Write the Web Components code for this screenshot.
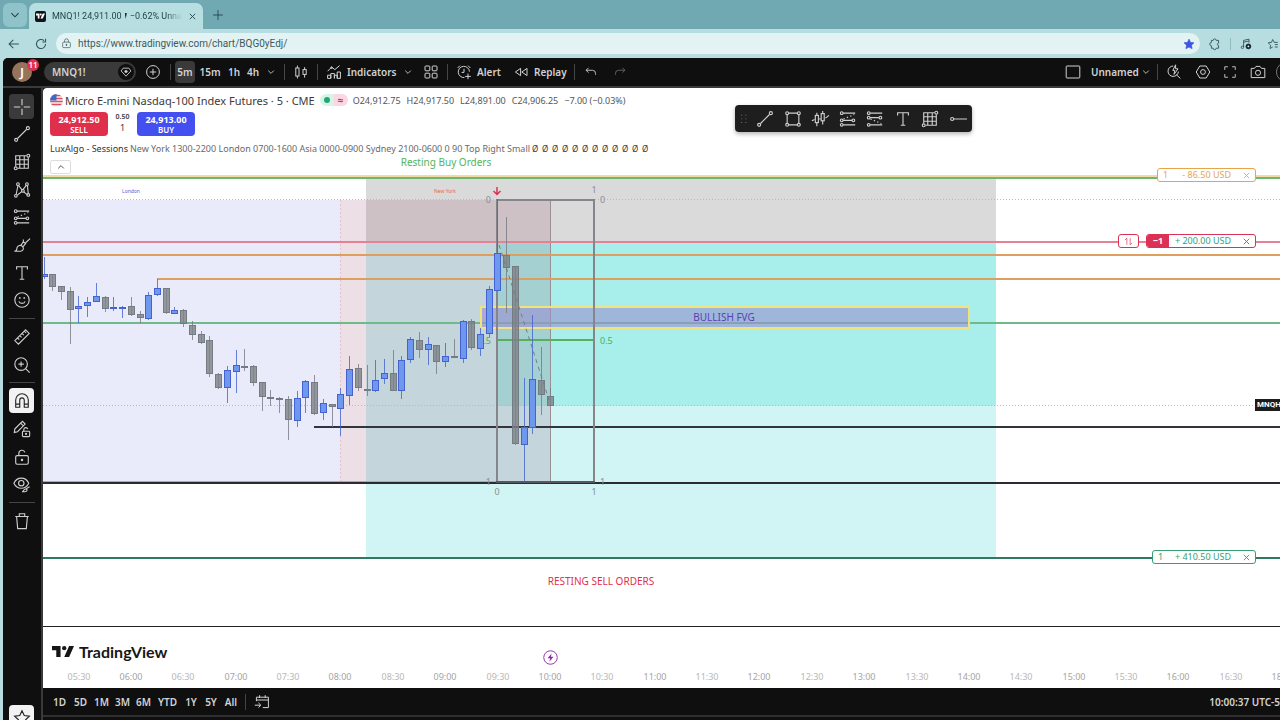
<!DOCTYPE html>
<html lang="en">
<head>
<meta charset="utf-8">
<title>MNQ1! chart</title>
<style>
  html, body { margin: 0; height: 100%; }
  body { font-family: "Noto Sans", "Open Sans", sans-serif; font-size: 10px; overflow: hidden; background: #b7dde1; }
</style>
</head>
<body>
<trading-window></trading-window>

<script>
const RESET = `
  *, *::before, *::after { box-sizing: border-box; }
  button { font: inherit; color: inherit; background: none; border: 0; padding: 0; margin: 0;
    display: inline-flex; align-items: center; justify-content: center; flex: none; white-space: nowrap; }
`;

function define(name, css, html, setup) {
  const tpl = document.createElement('template');
  tpl.innerHTML = `<style>${RESET}${css}</style>${html}`;
  customElements.define(name, class extends HTMLElement {
    constructor() {
      super();
      this.attachShadow({ mode: 'open' }).append(tpl.content.cloneNode(true));
    }
    connectedCallback() { if (setup) setup(this, this.shadowRoot); }
  });
}

/* ---------- icons: 20 x 20 grid, stroked with the current colour ---------- */
const ICONS = {
  chevron: '<path d="M6 8l4 4 4-4"/>',
  chevronUp: '<path d="M6 12l4-4 4 4"/>',
  close: '<path d="M4 4l12 12M16 4L4 16"/>',
  plus: '<path d="M10 3v14M3 10h14"/>',
  back: '<path d="M17 10H3M9 4l-6 6 6 6"/>',
  reload: '<path d="M16.5 10a6.5 6.5 0 1 1-2-4.7M16.5 2.5V7H12"/>',
  lock: '<rect x="3" y="7.500" width="14" height="10" rx="2"/><path d="M6.500 7.500V5a3.500 3.500 0 0 1 7 0v2.500"/><circle cx="10" cy="12.500" r="1" fill="currentColor"/>',
  starFull: '<path fill="currentColor" d="M10 2l2.500 5.300 5.700.7-4.200 4 1.100 5.700L10 15l-5.100 2.700L6 12 1.800 8l5.700-.7z"/>',
  star: '<path d="M10 2l2.500 5.300 5.700.7-4.200 4 1.100 5.700L10 15l-5.100 2.700L6 12 1.800 8l5.700-.7z"/>',
  starList: '<path d="M9.500 15L5 17.500l1-5.500-4-4 5.500-.7L9.500 2.500 12 7.300h6M13 11h5M13 15h5"/>',
  puzzle: '<path d="M7 4a2.500 2.500 0 0 1 5 0h4v4.500a2 2 0 0 0 0 4V17h-4a2.500 2.500 0 0 1-5 0H4v-4a2.700 2.700 0 0 1 0-5.500V4z"/>',
  music: '<path d="M6 15V4l9-2v6M6 7l9-2"/><circle cx="4" cy="15.500" r="2"/><circle cx="14" cy="14" r="4" fill="#123" stroke="#123"/><circle cx="14" cy="14" r="1.500" fill="#e3f2f2" stroke="none"/>',
  watch: '<path d="M6 4.500h8l3 4-7 7.500-7-7.500z"/><path d="M10 7v4.500M7.700 9.200h4.600" stroke-width="2"/>',
  plusCircle: '<circle cx="10" cy="10" r="8"/><path d="M10 6v8M6 10h8"/>',
  candles: '<rect x="3.500" y="5" width="4" height="10"/><path d="M5.500 2v3M5.500 15v3M14.500 4v3M14.500 13v4"/><rect x="12.500" y="7" width="4" height="6"/>',
  indicators: '<path d="M2 18v-4h4v4zM6 18v-6h4.500v6M10.500 18v-4h3.500v4M14 18v-8h4v8zM2 9l5-5 4 3 6-5"/><circle cx="7" cy="4.500" r="1"/>',
  grid: '<rect x="2.500" y="2.500" width="6" height="6" rx="1"/><rect x="11.500" y="2.500" width="6" height="6" rx="1"/><rect x="2.500" y="11.500" width="6" height="6" rx="1"/><rect x="11.500" y="11.500" width="6" height="6" rx="1"/>',
  alert: '<path d="M16.800 9.500a7 7 0 1 0-6.300 7.400M10 6v4.500H7M2 5l3-3M15 2l3 3M15 12v7M11.500 15.500h7"/>',
  replay: '<path d="M9.500 5.500v9L3 10zM17.500 5.500v9L11 10z"/>',
  undo: '<path d="M6.500 4L3 7.500 6.500 11M3 7.500h9a4.500 4.500 0 0 1 4.500 4.500v2"/>',
  redo: '<path d="M13.500 4L17 7.500 13.500 11M17 7.500H8A4.500 4.500 0 0 0 3.500 12v2"/>',
  square: '<rect x="1.500" y="2.500" width="17" height="15" rx="1"/>',
  quick: '<path d="M9 2.500a6.500 6.500 0 1 0 6.500 7M13 13.500l5 4.500M12 1L8.500 8H11l-1 5 5-7h-3z"/>',
  settings: '<path d="M6 2.500h8l4.500 7.500-4.500 7.500H6L1.500 10z"/><circle cx="10" cy="10" r="3"/>',
  full: '<path d="M2.500 7V2.500H7M13 2.500h4.500V7M17.500 13v4.500H13M7 17.500H2.500V13"/>',
  camera: '<path d="M1.500 5.500h4l2-2.500h5l2 2.500h4v11.500h-17z"/><circle cx="10" cy="11" r="3.200"/>',
  cross: '<path d="M10 1v7M10 12v7M1 10h7M12 10h7"/>',
  trend: '<circle cx="3.500" cy="16.500" r="1.700"/><circle cx="16.500" cy="3.500" r="1.700"/><path d="M5 15L15 5"/>',
  gridTool: '<path d="M3 15V3h12M17 5v12H5M3 7.500h14M3 12.500h14M7.500 3v14M12.500 3v14"/><circle cx="17" cy="3" r="1.600"/><circle cx="3" cy="17" r="1.600"/>',
  pattern: '<path d="M3.500 15L5.500 5M6.500 5.500l4 5M11 9.500l4-5M16 5l1 9M5 15.500l5-4M12 12l4 3.500"/><circle cx="3.200" cy="16.500" r="1.500"/><circle cx="5.500" cy="3.500" r="1.500"/><circle cx="11" cy="11" r="1.500"/><circle cx="15.500" cy="3.500" r="1.500"/><circle cx="17" cy="15.500" r="1.500"/>',
  projection: '<path d="M4.500 3.500H18M4.500 11.500h10M4.500 16.500H18"/><path d="M5 10l12-5" stroke-dasharray="1.500 2.500"/><circle cx="3" cy="3.500" r="1.500"/><circle cx="3" cy="11.500" r="1.500"/><circle cx="16" cy="11.500" r="1.500"/><circle cx="3" cy="16.500" r="1.500"/>',
  projectionDown: '<path d="M4.500 3.500H18M4.500 8.500h10M4.500 16.500H18"/><path d="M5 10l12 5" stroke-dasharray="1.500 2.500"/><circle cx="3" cy="3.500" r="1.500"/><circle cx="3" cy="8.500" r="1.500"/><circle cx="16" cy="8.500" r="1.500"/><circle cx="3" cy="16.500" r="1.500"/>',
  brush: '<path d="M1.500 17c3 0 2.500-2 3-4 .6-2.500 4-3.500 6-1.500s1 5-2 5.500zM9 10l2.500-3.500 2.500 2L11 12M14 7.500L19 3M11.500 6.500V4"/>',
  text: '<path d="M4 6V3h12v3M10 3v14M7.500 17h5"/>',
  smile: '<circle cx="10" cy="10" r="8"/><path d="M6.500 11.500c1 3 6 3 7 0"/><path d="M7.500 7v1.500M12.500 7v1.500" stroke-width="1.800"/>',
  ruler: '<path d="M2 14L14 2l4 4L6 18zM5 11l2 2M7.500 8.500l2 2M10 6l2 2M12.500 3.500l2 2"/>',
  zoom: '<circle cx="9" cy="9" r="7"/><path d="M14 14l4.500 4.500M9 6v6M6 9h6"/>',
  magnet: '<path d="M3 17V9a7 7 0 0 1 14 0v8h-4.500V9a2.500 2.500 0 0 0-5 0v8zM3 13.500h4.500M12.500 13.500H17"/>',
  penLock: '<path d="M2 10L10.500 1.500l3 3L5 13l-3.500.8zM8.500 3.500l3 3"/><rect x="10.500" y="12.500" width="8" height="6" rx="1"/><path d="M12 12.500v-2a2.200 2.200 0 0 1 4.300-.5"/><circle cx="14.500" cy="15.500" r=".6"/>',
  unlock: '<rect x="3" y="8.500" width="14" height="9.500" rx="1.500"/><path d="M6.500 8.500V6a3.500 3.500 0 0 1 6.800-1.200"/><path d="M10 12v2.500" stroke-width="2.400"/>',
  eye: '<path d="M1 8c3.500-7.500 13-7.500 16.500 0-3.500 7.500-13 7.500-16.500 0z"/><circle cx="9.200" cy="8" r="3"/><path d="M10 17.500c2 0 1.500-3 4-3s2 3-1 3zM14 14.500l4.500-2.500"/>',
  trash: '<path d="M2.500 5h15M4 5l1.200 13.500h9.600L16 5M7 5V2h6v3"/>',
  rect: '<path d="M5 3.500h10M5 16.500h10M3.500 5v10M16.500 5v10"/><circle cx="3.500" cy="3.500" r="1.600"/><circle cx="16.500" cy="3.500" r="1.600"/><circle cx="3.500" cy="16.500" r="1.600"/><circle cx="16.500" cy="16.500" r="1.600"/>',
  bars: '<path d="M1 12l3-1.500M16 9l4-3M6.500 3v3M6.500 14v4M13 1v3M13 12v4M9 10h2"/><rect x="4.800" y="6" width="3.400" height="8"/><rect x="11.300" y="4" width="3.400" height="8"/>',
  hline: '<circle cx="3.500" cy="10" r="1.700"/><path d="M5.500 10H20"/>',
  grip: '<path d="M6 3v1.500M13 3v1.500M6 9v1.500M13 9v1.500M6 15v1.500M13 15v1.500" stroke-width="2"/>',
  calendar: '<path d="M3 9V4h15v13h-7M3 7.500h15M7 1.500V5M14 1.500V5M1 14h7M5.500 11l3 3-3 3"/>',
  swap: '<path d="M7 16V4L3.500 7.500M13 4v12l3.500-3.500"/>',
  bolt: '<circle cx="10" cy="10" r="9"/><path d="M11.500 4.500L6 11h3.500l-1 4.500L14 9h-3.500z" fill="currentColor" stroke="none"/>'
};

define('tv-icon', `
  :host { display: inline-flex; flex: none; width: var(--icon, 16px); height: var(--icon, 16px); }
  svg { width: 100%; height: 100%; fill: none; stroke: currentColor; stroke-width: var(--stroke, 1.25); overflow: visible; }
`, `<svg viewBox="0 0 20 20" aria-hidden="true"></svg>`, (host, root) => {
  root.querySelector('svg').innerHTML = ICONS[host.getAttribute('name')] || '';
});

/* ---------- browser chrome ---------- */
define('browser-tabs', `
  :host { display: flex; height: 29px; padding: 3px 3px 0; background: #71a9b3; color: #24434a; }
  .list { width: 24px; height: 24px; border-radius: 6px; background: #8fc2c9; --icon: 18px; }
  .tab { display: flex; align-items: center; gap: 6px; width: 174px; height: 26px; margin-left: 2px; padding: 0 6px;
    background: #b7dfe2; border-radius: 7px 7px 0 0; }
  .fav { display: flex; align-items: center; justify-content: center; flex: none; width: 11px; height: 11px; border-radius: 2px; background: #12131a; }
  .title { flex: 1; display: flex; align-items: center; gap: 3px; overflow: hidden; white-space: nowrap; font-family: Roboto, sans-serif; font-size: 9px; color: #27454b;
    -webkit-mask-image: linear-gradient(90deg, #000 88%, transparent); mask-image: linear-gradient(90deg, #000 88%, transparent); }
  .down { width: 6px; height: 6px; background: #16282c; clip-path: polygon(0 0, 100% 0, 50% 100%); }
  .tab button { --icon: 9px; --stroke: 2; }
  .new { width: 30px; height: 24px; --icon: 14px; }
`, `
  <button class="list" aria-label="Search tabs"><tv-icon name="chevron"></tv-icon></button>
  <div class="tab">
    <span class="fav"><svg width="9" height="6" viewBox="0 0 36 20" fill="#fff"><path d="M0 0h14v20H7V8H0zM27 0h9l-9 20h-9z"/><circle cx="19" cy="4" r="4"/></svg></span>
    <span class="title"><span>MNQ1! 24,911.00</span><span class="down"></span><span>−0.62% Unna</span></span>
    <button aria-label="Close tab"><tv-icon name="close"></tv-icon></button>
  </div>
  <button class="new" aria-label="New tab"><tv-icon name="plus"></tv-icon></button>
`);

define('browser-address', `
  :host { display: flex; align-items: center; height: 29px; background: #b7dde1; color: #33545a; overflow: hidden; }
  .nav { width: 27px; height: 24px; --icon: 14px; --stroke: 1.5; }
  .url { display: flex; align-items: center; flex: 1; height: 21px; margin-left: 2px; padding: 0 5px; border-radius: 11px; background: #e3f2f2; --icon: 12px; }
  .lock { --icon: 11px; }
  input { flex: 1; min-width: 0; margin: 0 0 0 6px; border: 0; padding: 0; background: none; outline: 0; font: inherit; font-family: Roboto, sans-serif; font-size: 10px; color: #3d5a60; }
  .fav { color: #3d54e0; --icon: 12px; }
  .ext { width: 30px; height: 24px; --icon: 12px; --stroke: 1.5; }
  .sep { width: 1px; height: 12px; background: #8fbcc2; }
  .tail { display: flex; align-items: center; margin-right: -5px; }
  .tail .last { width: 24px; }
`, `
  <button class="nav" aria-label="Back"><tv-icon name="back"></tv-icon></button>
  <button class="nav" aria-label="Reload"><tv-icon name="reload"></tv-icon></button>
  <div class="url">
    <tv-icon class="lock" name="lock"></tv-icon>
    <input aria-label="Address" value="https://www.tradingview.com/chart/BQG0yEdj/">
    <button class="fav" aria-label="Bookmarked"><tv-icon name="starFull"></tv-icon></button>
  </div>
  <div class="tail">
    <button class="ext" aria-label="Extensions"><tv-icon name="puzzle"></tv-icon></button>
    <span class="sep"></span>
    <button class="ext" aria-label="Media"><tv-icon name="music"></tv-icon></button>
    <button class="ext last" aria-label="Favorites"><tv-icon name="starList"></tv-icon></button>
  </div>
`);

/* ---------- top toolbar ---------- */
define('tv-toolbar', `
  :host { display: flex; align-items: center; height: 30px; background: #0f0f0f; color: #d2d2d2; overflow: hidden;
    border-radius: 5px 0 0 0; border-bottom: 2px solid #3a3a3a; font-size: 10px; font-weight: 600; }
  button { height: 22px; }
  .avatar { position: relative; width: 38px; }
  .face { display: flex; align-items: center; justify-content: center; width: 20px; height: 20px; border-radius: 50%; background: #96745c; color: #fff; font-size: 13px; }
  .count { position: absolute; right: 2px; top: -2px; min-width: 12px; height: 12px; line-height: 12px; border-radius: 6px; background: #e0304e; color: #fff; font-size: 8px; text-align: center; }
  .symbol { width: 92px; height: 20px; margin-left: 3px; padding: 0 2px 0 8px; border-radius: 10px; background: #3a3a3a; justify-content: space-between; }
  .symbol span { display: flex; align-items: center; justify-content: center; width: 16px; height: 16px; border-radius: 50%; background: #0f0f0f; --icon: 14px; }
  .sep { flex: none; width: 1px; height: 16px; background: #454545; }
  .w16 { width: 16px; } .w18 { width: 18px; } .w20 { width: 20px; } .w22 { width: 22px; }
  .w24 { width: 24px; } .w26 { width: 26px; } .w28 { width: 28px; } .w30 { width: 30px; } .w32 { width: 32px; } .w34 { width: 34px; }
  .on { margin-left: 4px; border-radius: 4px; background: #3a3a3a; }
  .chev { --icon: 14px; }
  .g { margin-left: 5px; }
  .label { justify-content: flex-start; gap: 5px; padding-left: 8px; }
  .ind { width: 78px; } .alert { width: 57px; } .replay { width: 64px; }
  .off { color: #6a6a6a; }
  .right { display: flex; align-items: center; margin-left: auto; margin-right: -16px; }
  .name { width: 70px; gap: 10px; justify-content: flex-start; }
  .publish { width: 20px; height: 20px; margin-left: 4px; border: 1px solid #777; border-radius: 50%; }
  .sm { --icon: 14px; }
`, `
  <button class="avatar" aria-label="Profile"><span class="face">J</span><span class="count">11</span></button>
  <button class="symbol">MNQ1!<span><tv-icon name="watch"></tv-icon></span></button>
  <button class="w34" aria-label="Compare"><tv-icon name="plusCircle"></tv-icon></button>
  <span class="sep"></span>
  <button class="w20 on">5m</button>
  <button class="w30">15m</button>
  <button class="w18">1h</button>
  <button class="w20">4h</button>
  <button class="w16 chev" aria-label="Intervals"><tv-icon name="chevron"></tv-icon></button>
  <span class="sep g"></span>
  <button class="w32" aria-label="Chart type"><tv-icon name="candles"></tv-icon></button>
  <span class="sep"></span>
  <button class="label ind"><tv-icon name="indicators"></tv-icon>Indicators</button>
  <button class="w24 chev" aria-label="Favorite indicators"><tv-icon name="chevron"></tv-icon></button>
  <button class="w22" aria-label="Templates"><tv-icon name="grid"></tv-icon></button>
  <span class="sep g"></span>
  <button class="label alert"><tv-icon name="alert"></tv-icon>Alert</button>
  <button class="label replay"><tv-icon name="replay"></tv-icon>Replay</button>
  <span class="sep g"></span>
  <button class="w32 sm" aria-label="Undo"><tv-icon name="undo"></tv-icon></button>
  <button class="w26 sm off" aria-label="Redo"><tv-icon name="redo"></tv-icon></button>
  <div class="right">
    <button class="name"><tv-icon name="square"></tv-icon>Unnamed</button>
    <button class="w22 chev" aria-label="Layouts"><tv-icon name="chevron"></tv-icon></button>
    <span class="sep"></span>
    <button class="w32" aria-label="Quick search"><tv-icon name="quick"></tv-icon></button>
    <button class="w26" aria-label="Settings"><tv-icon name="settings"></tv-icon></button>
    <button class="w28 sm" aria-label="Fullscreen"><tv-icon name="full"></tv-icon></button>
    <button class="w28" aria-label="Snapshot"><tv-icon name="camera"></tv-icon></button>
    <button class="publish" aria-label="Publish"></button>
  </div>
`);

/* ---------- drawing tools ---------- */
define('tv-drawing-bar', `
  :host { display: flex; flex-direction: column; align-items: center; width: 40px; padding: 6px 1px 0 0; overflow: hidden;
    background: #0f0f0f; color: #cfcfcf; border-right: 2px solid #3a3a3a; --icon: 18px; }
  button { width: 25px; height: 25px; border-radius: 4px; }
  .group { display: flex; flex-direction: column; justify-content: space-between; flex: none; }
  .draw { height: 219px; } .measure { height: 53px; } .lock { height: 109px; }
  .sep { flex: none; width: 26px; height: 1px; margin: 5px 0; background: #444; }
  .on { background: #3a3a3a; }
  .lit { background: #f2f2f2; color: #222; }
  .fav { margin-top: auto; margin-bottom: -10px; }
`, `
  <div class="group draw">
    <button class="on" aria-label="Cross"><tv-icon name="cross"></tv-icon></button>
    <button aria-label="Trend line"><tv-icon name="trend"></tv-icon></button>
    <button aria-label="Gann and Fibonacci"><tv-icon name="gridTool"></tv-icon></button>
    <button aria-label="Patterns"><tv-icon name="pattern"></tv-icon></button>
    <button aria-label="Forecasting"><tv-icon name="projection"></tv-icon></button>
    <button aria-label="Brushes"><tv-icon name="brush"></tv-icon></button>
    <button aria-label="Text"><tv-icon name="text"></tv-icon></button>
    <button aria-label="Icons"><tv-icon name="smile"></tv-icon></button>
  </div>
  <span class="sep"></span>
  <div class="group measure">
    <button aria-label="Measure"><tv-icon name="ruler"></tv-icon></button>
    <button aria-label="Zoom in"><tv-icon name="zoom"></tv-icon></button>
  </div>
  <span class="sep"></span>
  <div class="group lock">
    <button class="lit" aria-label="Magnet"><tv-icon name="magnet"></tv-icon></button>
    <button aria-label="Stay in drawing mode"><tv-icon name="penLock"></tv-icon></button>
    <button aria-label="Lock drawings"><tv-icon name="unlock"></tv-icon></button>
    <button aria-label="Hide drawings"><tv-icon name="eye"></tv-icon></button>
  </div>
  <span class="sep"></span>
  <button aria-label="Remove"><tv-icon name="trash"></tv-icon></button>
  <button class="lit fav" aria-label="Favorites"><tv-icon name="star"></tv-icon></button>
`);

/* ---------- chart plot ---------- */
/* Bars: [up, high, open/close top, open/close bottom, low], in plot rows. */
const BARS = [
  [1,169,186,189,191],[0,186,186,199,203],[0,198,198,204,212],[0,199,203,222,256],[1,208,218,221,235],
  [1,209,214,218,229],[1,195,208,214,214],[0,208,209,221,224],[1,209,219,221,223],[1,218,219,220,230],
  [0,209,218,227,228],[0,223,226,230,235],[1,204,207,231,232],[1,191,200,207,208],[0,200,200,225,226],
  [1,219,222,226,226],[0,221,222,236,239],[0,233,237,247,252],[0,243,246,255,256],[0,248,252,286,289],
  [0,285,286,300,301],[1,278,282,300,315],[1,262,277,284,305],[0,261,278,279,283],[0,277,278,295,298],
  [0,294,294,309,323],[0,302,309,311,318],[0,309,310,312,325],[0,308,311,332,352],[1,303,310,333,339],
  [1,292,293,310,325],[0,287,294,326,327],[1,311,315,325,332],[0,316,316,319,339],[1,300,306,321,348],
  [1,268,281,308,317],[0,276,280,300,303],[0,277,301,303,308],[1,272,292,303,304],[1,271,285,291,296],
  [0,262,285,303,303],[1,268,272,303,311],[1,249,251,272,275],[0,244,252,262,270],[1,249,256,262,277],
  [0,257,257,274,286],[1,255,268,274,279],[0,251,268,270,270],[1,232,233,271,275],[0,231,233,260,262],
  [1,240,246,261,268],[1,198,201,246,249],[1,111,165,203,203],[0,129,167,180,225],[0,178,178,356,357],
  [1,290,339,357,394],[1,227,291,340,346],[0,259,292,307,327],[0,300,308,318,318]
];

define('tv-plot', `
  :host { display: block; overflow: hidden; }
  svg { display: block; width: 100%; height: 100%; }
  text { font-family: inherit; font-size: 9px; }
  .mid { text-anchor: middle; }
  .end { text-anchor: end; }
  .lvl { fill: #8a8f90; }
`, `
  <svg shape-rendering="crispEdges">
    <g class="zones">
      <rect x="0" y="112" width="297" height="281" fill="#e9ebfb"/>
      <rect x="297" y="112" width="27" height="281" fill="#ecdfe6"/>
      <rect x="323" y="88" width="630" height="67" fill="#dbdadb"/>
      <rect x="323" y="112" width="184" height="43" fill="#cdc1c6"/>
      <rect x="323" y="155" width="630" height="314" fill="#d1f5f4"/>
      <rect x="507" y="155" width="446" height="163" fill="#a8efec"/>
      <rect x="323" y="155" width="184" height="238" fill="#c4d5dc"/>
      <rect x="454" y="155" width="53" height="163" fill="#a5d0d1"/>
      <path d="M0 393.500h507" stroke="#a9a9b8"/>
      <path d="M507.500 112v281" stroke="#9a8f97"/>
      <path d="M297.500 112v281" stroke="#e2c3cd" stroke-dasharray="2 2"/>
    </g>
    <g stroke="#b9b9bc" stroke-dasharray="1 2">
      <path d="M0 111.500H9999M0 317.500H9999"/>
    </g>
    <g>
      <rect x="0" y="87" width="100%" height="2" fill="#f3d9a4"/>
      <rect x="0" y="89" width="100%" height="2" fill="#6cb870"/>
      <rect x="0" y="153" width="100%" height="2" fill="#e58097"/>
      <path d="M0 167H9999M114 191H9999" stroke="#dd9f5e" stroke-width="2"/>
      <path d="M0 235H9999" stroke="#70b98a" stroke-width="2"/>
      <path d="M271 339H9999" stroke="#33353c" stroke-width="2"/>
      <path d="M0 395H9999" stroke="#2a2c31" stroke-width="2"/>
      <path d="M0 470H9999" stroke="#2f7a5f" stroke-width="2"/>
      <rect x="0" y="538" width="100%" height="1" fill="#222"/>
    </g>
    <rect x="438" y="219" width="488" height="21" fill="#9a8fd0" fill-opacity=".6" stroke="#f0e27c" stroke-width="2"/>
    <path d="M454 252h96" stroke="#57b05a" stroke-width="2"/>
    <path d="M454 111v283M551 111v283M453 112h99" stroke="#85858b" stroke-width="2" fill="none"/>
    <path d="M453 394h99" stroke="#55585f" stroke-width="2"/>
    <g class="lvl">
      <text class="end" x="448" y="115">0</text><text x="557" y="115">0</text>
      <text class="mid" x="551" y="105">1</text>
      <text class="end" x="448" y="397">1</text><text x="557" y="397">1</text>
      <text class="mid" x="454" y="407">0</text><text class="mid" x="551" y="407">1</text>
      <text class="end" x="448" y="256" fill="#4fae54">0.5</text><text x="557" y="256" fill="#4fae54">0.5</text>
    </g>
    <g class="bars"></g>
    <path d="M456 157L506 312" stroke="#6e7f85" stroke-dasharray="4 4" fill="none" shape-rendering="auto"/>
    <path d="M454 99v7M450.500 103l3.500 3.500 3.500-3.500" stroke="#e0304e" stroke-width="1.500" fill="none" shape-rendering="auto"/>
    <text class="mid" x="88" y="105" fill="#5a62d8" style="font-size:5px">London</text>
    <text class="mid" x="402" y="105" fill="#f0644c" style="font-size:5px">New York</text>
    <text class="mid" x="403" y="78" fill="#54b45a" style="font-size:10px">Resting Buy Orders</text>
    <text class="mid" x="681" y="233" fill="#5b3fb4" style="font-size:10px">BULLISH FVG</text>
    <text class="mid" x="558" y="497" fill="#e0304e" style="font-size:10px">RESTING SELL ORDERS</text>
    <g class="times"></g>
  </svg>
`, (host, root) => {
  const step = 8.73;
  root.querySelector('.bars').innerHTML = BARS.map(([up, hi, top, bottom, lo], i) => {
    const x = Math.round(i * step + 0.5);
    const [fill, edge] = up ? ['#6d98ee', '#4463d0'] : ['rgba(124,130,135,.8)', '#757b82'];
    return `<path d="M${x + 0.5} ${hi}V${lo}" stroke="${edge}" stroke-opacity=".8"/>` +
      `<rect x="${x - 2.5}" y="${top + 0.5}" width="6" height="${Math.max(bottom - top - 1, 1)}" fill="${fill}" stroke="${edge}"/>`;
  }).join('');
  let labels = '';
  for (let n = 0; n < 24; n++) {
    const minutes = 330 + n * 30 + (n === 23 ? 60 : 0);
    const text = String(Math.floor(minutes / 60)).padStart(2, '0') + ':' + String(minutes % 60).padStart(2, '0');
    labels += `<text class="mid" x="${Math.round(35.5 + n * 6 * step)}" y="592" fill="${minutes % 60 ? '#b8b8b8' : '#a4a4a4'}">${text}</text>`;
  }
  root.querySelector('.times').innerHTML = labels;
});

/* ---------- legend ---------- */
define('tv-legend', `
  :host { display: flex; flex-direction: column; align-items: flex-start; color: #3a3a3a; white-space: nowrap; }
  .row { display: flex; align-items: center; }
  .head { height: 14px; }
  .flag { flex: none; margin-right: 2px; }
  h1 { margin: 0; font-size: 11px; font-weight: 400; }
  .state { display: flex; margin: 0 5px; border-radius: 6px; overflow: hidden; height: 12px; }
  .state span { display: flex; align-items: center; justify-content: center; width: 14px; }
  .open { background: #d8f3e8; } .open::before { content: ""; width: 6px; height: 6px; border-radius: 50%; background: #1fa874; }
  .delay { background: #fbd7e3; color: #d2306a; font-size: 10px; font-weight: 700; line-height: 12px; }
  .ohlc { display: flex; gap: 6px; font-size: 9px; color: #555; }
  .trade { height: 24px; margin-top: 5px; }
  .trade button { flex-direction: column; width: 58px; height: 24px; border-radius: 4px; color: #fff; font-weight: 700; font-size: 9px; line-height: 11px; }
  .trade small { font-size: 8px; font-weight: 600; line-height: 9px; }
  .sell { background: #df2f4b; } .buy { background: #4350ef; }
  .spread { display: flex; flex-direction: column; align-items: center; width: 29px; font-size: 9px; line-height: 14px; }
  .spread small { font-size: 7px; line-height: 8px; }
  .study { height: 14px; margin-top: 5px; font-size: 9px; color: #6a6a6a; }
  .study b { margin-right: 2px; font-weight: 400; color: #333; }
  .nulls { display: flex; color: #333; }
  .nulls span { width: 10px; text-align: center; font-size: 8px; }
  .fold { width: 21px; height: 14px; margin-top: 5px; border: 1px solid #ddd; border-radius: 2px; background: #fff; --icon: 14px; }
`, `
  <div class="row head">
    <svg class="flag" width="13" height="13" viewBox="0 0 13 13"><clipPath id="c"><circle cx="6.500" cy="6.500" r="6.500"/></clipPath>
      <g clip-path="url(#c)"><path fill="#f3f3f7" d="M0 0h13v13H0z"/><path stroke="#dd4f5c" stroke-width="1.500" d="M0 1.500h13M0 4.500h13M0 7.500h13M0 10.500h13"/><path fill="#3f69c4" d="M0 0h6.500v6.500H0z"/></g></svg>
    <h1>Micro E-mini Nasdaq-100 Index Futures · 5 · CME</h1>
    <div class="state"><span class="open"></span><span class="delay">≈</span></div>
    <div class="ohlc"><span>O24,912.75</span><span>H24,917.50</span><span>L24,891.00</span><span>C24,906.25</span><span>−7.00 (−0.03%)</span></div>
  </div>
  <div class="row trade">
    <button class="sell">24,912.50<small>SELL</small></button>
    <div class="spread"><small>0.50</small>1</div>
    <button class="buy">24,913.00<small>BUY</small></button>
  </div>
  <div class="row study"><b>LuxAlgo - Sessions</b><span>New York 1300-2200 London 0700-1600 Asia 0000-0900 Sydney 2100-0600 0 90 Top Right Small</span>
    <div class="nulls"></div></div>
  <button class="fold" aria-label="Collapse legend"><tv-icon name="chevronUp"></tv-icon></button>
`, (host, root) => {
  root.querySelector('.nulls').innerHTML = '<span>Ø</span>'.repeat(12);
});

define('tv-favorites', `
  :host { display: flex; align-items: center; justify-content: space-between; height: 27px; padding: 0 1px 0 2px; border-radius: 4px; background: #1e1e1e; color: #d0d0d0;
    box-shadow: 0 2px 4px rgba(0,0,0,.3); --icon: 18px; }
  button { width: 27px; height: 27px; }
  .grip { width: 14px; color: #666; --icon: 12px; }
`, `
  <button class="grip" aria-label="Move"><tv-icon name="grip"></tv-icon></button>
  <button aria-label="Trend line"><tv-icon name="trend"></tv-icon></button>
  <button aria-label="Rectangle"><tv-icon name="rect"></tv-icon></button>
  <button aria-label="Bars pattern"><tv-icon name="bars"></tv-icon></button>
  <button aria-label="Long position"><tv-icon name="projection"></tv-icon></button>
  <button aria-label="Short position"><tv-icon name="projectionDown"></tv-icon></button>
  <button aria-label="Text"><tv-icon name="text"></tv-icon></button>
  <button aria-label="Gann box"><tv-icon name="gridTool"></tv-icon></button>
  <button aria-label="Horizontal ray"><tv-icon name="hline"></tv-icon></button>
`);

define('tv-order', `
  :host { display: flex; align-items: center; height: 14px; color: var(--line); font-size: 9px; line-height: 12px; }
  .swap { width: 21px; height: 14px; margin-right: 7px; border: 1px solid; border-radius: 3px; background: #fff; --icon: 11px; }
  .box { display: flex; align-items: center; height: 14px; border: 1px solid; border-radius: 3px; background: #fff; overflow: hidden; }
  .qty { width: 15px; text-align: center; }
  .pnl { width: var(--pnl); padding-right: 7px; text-align: right; color: var(--value, inherit); white-space: nowrap; }
  .box button { width: 17px; --icon: 9px; --stroke: 2; }
  :host(:not([swap])) .swap { display: none; }
  :host([swap]) .qty { width: 22px; background: var(--line); }
  :host([swap]) .qty ::slotted(*) { color: #fff; font-weight: 700; }
`, `
  <button class="swap" aria-label="Reverse"><tv-icon name="swap"></tv-icon></button>
  <div class="box"><span class="qty"><slot name="qty"></slot></span><span class="pnl"><slot></slot></span>
    <button aria-label="Close order"><tv-icon name="close"></tv-icon></button></div>
`);

define('tv-chart', `
  :host { display: block; position: relative; min-width: 0; background: #fff; overflow: hidden; border-radius: 4px 0 0 0; }
  tv-plot { position: absolute; inset: 0; }
  tv-legend { position: absolute; left: 7px; top: 5px; }
  tv-favorites { position: absolute; left: 692px; top: 17px; width: 237px; }
  tv-order { position: absolute; right: 24px; }
  .limit { top: 80px; --line: #e8a44a; --pnl: 65px; }
  .position { top: 146px; --line: #dc3055; --value: #2fa37a; --pnl: 69px; }
  .stop { top: 462px; --line: #35a06f; --pnl: 70px; }
  .last { position: absolute; right: 0; top: 311px; width: 25px; height: 12px; padding-left: 2px; background: #1c1c1c; color: #fff; font-family: Roboto, sans-serif; font-size: 8px; font-weight: 700; line-height: 12px; overflow: hidden; }
  .brand { position: absolute; left: 9px; top: 553px; display: flex; align-items: center; gap: 5px; height: 20px; color: #161616;
    font-family: Lato, sans-serif; font-size: 16px; font-weight: 700; text-decoration: none; }
  .event { position: absolute; left: 500px; top: 562px; color: #8b2fa0; --icon: 15px; }
`, `
  <tv-plot></tv-plot>
  <tv-legend></tv-legend>
  <tv-favorites></tv-favorites>
  <tv-order class="limit"><span slot="qty">1</span>- 86.50 USD</tv-order>
  <tv-order class="position" swap><span slot="qty">−1</span>+ 200.00 USD</tv-order>
  <tv-order class="stop"><span slot="qty">1</span>+ 410.50 USD</tv-order>
  <span class="last">MNQH</span>
  <a class="brand" href="#"><svg width="22" height="11" viewBox="0 0 36 18" fill="#161616"><path d="M0 0h14v18H7V7H0zM28 0h8l-8 18h-8z"/><circle cx="20" cy="3.500" r="3.500"/></svg>TradingView</a>
  <button class="event" aria-label="Event"><tv-icon name="bolt"></tv-icon></button>
`);

/* ---------- range bar ---------- */
define('tv-ranges', `
  :host { display: flex; align-items: center; height: 29px; padding-left: 6px; background: #0f0f0f; color: #d2d2d2;
    border-bottom: 2px solid #303030; font-size: 10px; font-weight: 600; overflow: hidden; }
  button { width: 21px; height: 20px; }
  .ytd { width: 27px; }
  .last { width: 20px; }
  .sep { width: 1px; height: 16px; margin-left: 4px; background: #444; }
  .goto { width: 32px; --icon: 16px; }
  .clock { width: auto; margin-left: auto; }
`, `
  <button>1D</button><button>5D</button><button>1M</button><button>3M</button><button>6M</button><button class="ytd">YTD</button><button class="last">1Y</button><button class="last">5Y</button><button class="last">All</button>
  <span class="sep"></span>
  <button class="goto" aria-label="Go to date"><tv-icon name="calendar"></tv-icon></button>
  <button class="clock">10:00:37 UTC-5</button>
`);

define('trading-window', `
  :host { display: flex; flex-direction: column; height: 100vh; overflow: hidden; }
  .app { flex: 1; min-height: 0; display: flex; flex-direction: column; margin-left: 3px; border-radius: 5px 0 0 0; background: #0f0f0f; overflow: hidden; }
  .work { flex: 1; min-height: 0; display: flex; }
  .main { flex: 1; min-width: 0; display: flex; flex-direction: column; padding-bottom: 3px; }
  tv-chart { flex: 1; min-height: 0; }
  browser-tabs, browser-address, tv-toolbar, tv-drawing-bar, tv-ranges { flex: none; }
`, `
  <browser-tabs></browser-tabs>
  <browser-address></browser-address>
  <div class="app">
    <tv-toolbar></tv-toolbar>
    <div class="work">
      <tv-drawing-bar></tv-drawing-bar>
      <div class="main"><tv-chart></tv-chart><tv-ranges></tv-ranges></div>
    </div>
  </div>
`);
</script>
</body>
</html>
